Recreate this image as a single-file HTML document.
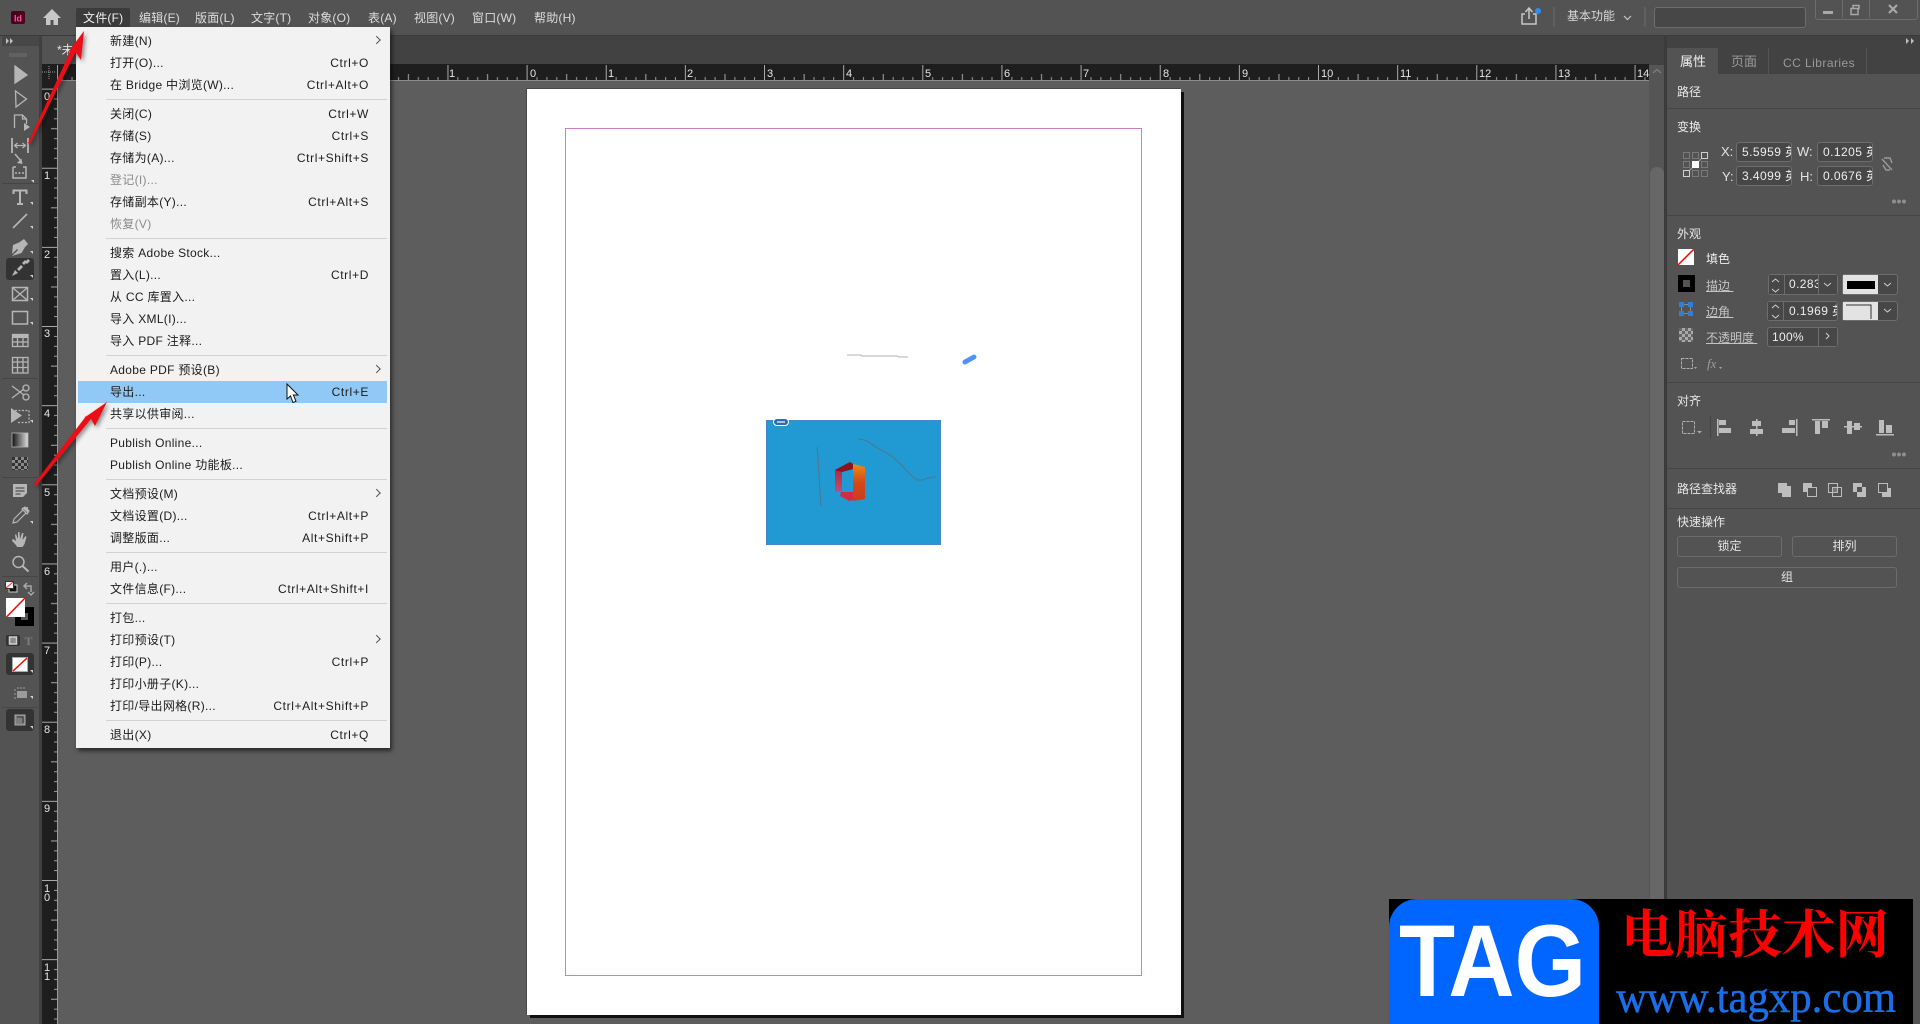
<!DOCTYPE html>
<html lang="zh"><head><meta charset="utf-8"><title>InDesign</title>
<style>
html,body{margin:0;padding:0;background:#5d5d5d}
body{position:relative;width:1920px;height:1024px;overflow:hidden;font-family:"Liberation Sans","Noto Sans CJK SC",sans-serif;font-size:12px;color:#e4e4e4}
.a{position:absolute}
.t{position:absolute;line-height:18px;white-space:nowrap}
.mb{position:absolute;top:9px;line-height:18px;color:#dcdcdc;white-space:nowrap;letter-spacing:.2px}
#menu{position:absolute;left:76px;top:27px;width:314px;height:721px;background:#f2f2f2;box-shadow:2px 3px 4px rgba(0,0,0,.55);color:#1c1c1c;padding-top:3px;box-sizing:border-box}
.i{position:relative;height:22px;line-height:22px;margin:0 3px 0 2px;padding-left:32px;white-space:nowrap;letter-spacing:.3px}
.i b{font-weight:400;position:absolute;right:18px;top:0;letter-spacing:.62px}
.i i{font-style:normal;position:absolute;right:6px;top:7px;width:5px;height:5px;border-top:1px solid #555;border-right:1px solid #555;transform:rotate(45deg) translate(-1px,1px)}
.d{color:#8b8b8b}
.s{height:1px;margin:3px 3px 3px 30px;background:#d2d2d2}
.h{background:#90c8f6}
.in{position:absolute;height:19px;line-height:18px;border:1px solid #6d6d6d;border-radius:3px;background:#474747;overflow:hidden;box-sizing:content-box;color:#eee;white-space:nowrap}
.btn{position:absolute;height:19px;line-height:19px;border:1px solid #6c6c6c;border-radius:3px;text-align:center;color:#e4e4e4}
.sep{position:absolute;left:1667px;right:0;height:1px;background:#454545}
.u{color:#c4c4c4;text-decoration:underline}
</style></head><body>

<div class="a" style="left:0;top:0;width:1920px;height:35px;background:#535353"></div>
<div class="a" style="left:0;top:35px;width:1920px;height:1px;background:#3a3a3a"></div>
<div class="a" style="left:42px;top:36px;width:1623px;height:29px;background:#424242"></div>
<div class="a" style="left:42px;top:36px;width:95px;height:29px;background:#535353"></div>
<div class="t" style="left:57px;top:41px;color:#e4e4e4;font-size:12px">*未</div>
<div class="a" style="left:42px;top:64px;width:1607px;height:16px;background:#1e1e1e"></div>
<div class="a" style="left:0;top:36px;width:39px;height:988px;background:#535353"></div>
<div class="a" style="left:39px;top:36px;width:3px;height:988px;background:#404040"></div>
<div class="a" style="left:2px;top:36px;width:37px;height:10px;background:#474747"></div>
<div class="a" style="left:42px;top:80px;width:15px;height:944px;background:#1e1e1e"></div>

<!-- page -->
<div class="a" style="left:527px;top:89px;width:654px;height:926px;background:#fff;box-shadow:3px 3px 0 #111,-1px -1px 0 #474747"></div>
<div class="a" style="left:565px;top:128px;width:575px;height:846px;border:1px solid #cf7ec4;border-left-color:#9a92ea;border-right-color:#9a92ea"></div>

<!-- image -->
<div class="a" style="left:766px;top:420px;width:173px;height:123px;background:#219ad4;border:1px solid #4486c8"></div>

<!-- right side -->
<div class="a" style="left:1649px;top:65px;width:16px;height:959px;background:#555"></div>
<div class="a" style="left:1650px;top:167px;width:14px;height:857px;background:#676767;border-radius:7px 7px 0 0"></div>
<div class="a" style="left:1664px;top:36px;width:3px;height:988px;background:#3b3b3b"></div>
<div class="a" style="left:1667px;top:36px;width:253px;height:988px;background:#535353"></div>
<div class="a" style="left:1667px;top:36px;width:253px;height:12px;background:#424242"></div>
<div class="a" style="left:1667px;top:48px;width:253px;height:26px;background:#424242"></div>
<div class="a" style="left:1667px;top:48px;width:51px;height:27px;background:#535353"></div>
<div class="a" style="left:1768px;top:48px;width:1px;height:26px;background:#555"></div>
<div class="a" style="left:1866px;top:48px;width:1px;height:26px;background:#555"></div>
<div class="t" style="left:1680px;top:53px;font-size:13px;color:#f0f0f0">属性</div>
<div class="t" style="left:1731px;top:53px;font-size:13px;color:#9a9a9a">页面</div>
<div class="t" style="left:1783px;top:54px;color:#9a9a9a;letter-spacing:.45px">CC Libraries</div>

<div class="t" style="left:1677px;top:83px;color:#e8e8e8">路径</div>
<div class="sep" style="top:108px"></div>
<div class="t" style="left:1677px;top:118px;color:#e8e8e8">变换</div>
<div class="t" style="left:1721px;top:143px;font-size:13px">X:</div>
<div class="t" style="left:1722px;top:168px;font-size:13px">Y:</div>
<div class="t" style="left:1797px;top:143px;font-size:13px">W:</div>
<div class="t" style="left:1800px;top:168px;font-size:13px">H:</div>
<div class="in" style="left:1736px;top:142px;width:54px;height:18px;padding-left:0"><span style="margin-left:5px;letter-spacing:.45px">5.5959 英</span></div>
<div class="in" style="left:1736px;top:166px;width:54px;height:18px"><span style="margin-left:5px;letter-spacing:.45px">3.4099 英</span></div>
<div class="in" style="left:1817px;top:142px;width:54px;height:18px"><span style="margin-left:5px;letter-spacing:.45px">0.1205 英</span></div>
<div class="in" style="left:1817px;top:166px;width:54px;height:18px"><span style="margin-left:5px;letter-spacing:.45px">0.0676 英</span></div>
<div class="sep" style="top:215px"></div>
<div class="t" style="left:1677px;top:225px;color:#e8e8e8">外观</div>
<div class="t" style="left:1706px;top:250px;color:#eee">填色</div>
<div class="t u" style="left:1706px;top:277px">描边&nbsp;</div>
<div class="t u" style="left:1706px;top:303px">边角&nbsp;</div>
<div class="t u" style="left:1706px;top:329px">不透明度&nbsp;</div>

<div class="in" style="left:1768px;top:274px;width:68px;height:19px"><span style="margin-left:20px;letter-spacing:.4px">0.283</span></div>
<div class="a" style="left:1769px;top:275px;width:15px;height:19px;background:#474747;border-right:1px solid #6d6d6d"></div>
<div class="a" style="left:1818px;top:275px;width:18px;height:19px;background:#474747;border-left:1px solid #6d6d6d"></div>
<div class="in" style="left:1842px;top:274px;width:54px;height:19px"></div>
<div class="a" style="left:1843px;top:275px;width:35px;height:19px;background:#e3e3e3"></div>
<div class="a" style="left:1847px;top:281px;width:28px;height:8px;background:#000"></div>

<div class="in" style="left:1767px;top:301px;width:69px;height:18px"><span style="margin-left:21px;letter-spacing:.45px">0.1969 英</span></div>
<div class="a" style="left:1768px;top:302px;width:15px;height:18px;background:#474747;border-right:1px solid #6d6d6d"></div>
<div class="in" style="left:1842px;top:301px;width:54px;height:18px"></div>
<div class="a" style="left:1843px;top:302px;width:35px;height:18px;background:#e3e3e3"></div>

<div class="in" style="left:1767px;top:327px;width:69px;height:18px"><span style="margin-left:4px;letter-spacing:.3px">100%</span></div>
<div class="a" style="left:1818px;top:328px;width:18px;height:18px;background:#474747;border-left:1px solid #6d6d6d"></div>

<div class="sep" style="top:382px"></div>
<div class="t" style="left:1677px;top:392px;color:#e8e8e8">对齐</div>
<div class="sep" style="top:468px"></div>
<div class="t" style="left:1677px;top:480px;color:#e8e8e8">路径查找器</div>
<div class="sep" style="top:508px"></div>
<div class="t" style="left:1677px;top:513px;color:#e8e8e8">快速操作</div>
<div class="btn" style="left:1677px;top:536px;width:103px">锁定</div>
<div class="btn" style="left:1792px;top:536px;width:103px">排列</div>
<div class="btn" style="left:1677px;top:567px;width:218px">组</div>

<!-- top bar right -->
<div class="a" style="left:1553px;top:7px;width:2px;height:20px;background:#5f5f5f"></div>
<div class="t" style="left:1567px;top:7px;color:#d8d8d8">基本功能</div>
<div class="a" style="left:1644px;top:7px;width:2px;height:20px;background:#5f5f5f"></div>
<div class="a" style="left:1654px;top:7px;width:150px;height:19px;background:#474747;border:1px solid #6d6d6d;border-radius:3px"></div>
<div class="a" style="left:1815px;top:-3px;width:101px;height:21px;border:1px solid #6d6d6d;border-radius:3px"></div>
<div class="a" style="left:1842px;top:0;width:1px;height:18px;background:#6d6d6d"></div>
<div class="a" style="left:1869px;top:0;width:1px;height:18px;background:#6d6d6d"></div>

<!-- menu bar -->
<div class="a" style="left:76px;top:8px;width:54px;height:19px;background:#3b3b3b;border-radius:2px 2px 0 0"></div>
<span class="mb" style="left:83px;color:#f0f0f0">文件(F)</span>
<span class="mb" style="left:139px">编辑(E)</span>
<span class="mb" style="left:195px">版面(L)</span>
<span class="mb" style="left:251px">文字(T)</span>
<span class="mb" style="left:308px">对象(O)</span>
<span class="mb" style="left:368px">表(A)</span>
<span class="mb" style="left:414px">视图(V)</span>
<span class="mb" style="left:472px">窗口(W)</span>
<span class="mb" style="left:534px">帮助(H)</span>

<svg class="a" style="left:0;top:0" width="1920" height="1024" viewBox="0 0 1920 1024">
<defs>
<pattern id="hr" patternUnits="userSpaceOnUse" width="79.14" height="16" x="526.6" y="65">
<rect x="0" y="0" width="1" height="16" fill="#a8a8a8"/>
<rect x="9.9" y="12" width="1" height="4" fill="#9a9a9a"/><rect x="19.8" y="12" width="1" height="4" fill="#9a9a9a"/><rect x="29.7" y="12" width="1" height="4" fill="#9a9a9a"/><rect x="39.6" y="9" width="1" height="7" fill="#a8a8a8"/><rect x="49.5" y="12" width="1" height="4" fill="#9a9a9a"/><rect x="59.4" y="12" width="1" height="4" fill="#9a9a9a"/><rect x="69.2" y="12" width="1" height="4" fill="#9a9a9a"/>
</pattern>
<pattern id="vr" patternUnits="userSpaceOnUse" width="16" height="79.14" x="42" y="88.6">
<rect x="0" y="0" width="16" height="1" fill="#a8a8a8"/>
<rect x="12" y="9.9" width="4" height="1" fill="#9a9a9a"/><rect x="12" y="19.8" width="4" height="1" fill="#9a9a9a"/><rect x="12" y="29.7" width="4" height="1" fill="#9a9a9a"/><rect x="9" y="39.6" width="7" height="1" fill="#a8a8a8"/><rect x="12" y="49.5" width="4" height="1" fill="#9a9a9a"/><rect x="12" y="59.4" width="4" height="1" fill="#9a9a9a"/><rect x="12" y="69.2" width="4" height="1" fill="#9a9a9a"/>
</pattern>
<pattern id="ck" patternUnits="userSpaceOnUse" width="6" height="6" x="12" y="457"><rect width="6" height="6" fill="#8a8a8a"/><rect width="3" height="3" fill="#333"/><rect x="3" y="3" width="3" height="3" fill="#333"/></pattern>
<pattern id="ck2" patternUnits="userSpaceOnUse" width="6" height="6" x="1679" y="328"><rect width="6" height="6" fill="#aaa"/><rect width="3" height="3" fill="#666"/><rect x="3" y="3" width="3" height="3" fill="#666"/></pattern>
<linearGradient id="gr"><stop offset="0" stop-color="#111"/><stop offset="1" stop-color="#ddd"/></linearGradient>
<linearGradient id="o1" x1="0" y1="1" x2="0" y2="0"><stop offset="0" stop-color="#c04d74"/><stop offset="1" stop-color="#a81f2c"/></linearGradient>
<linearGradient id="o2" x1="0" y1="0" x2="0" y2="1"><stop offset="0" stop-color="#ee8a12"/><stop offset=".5" stop-color="#d2491c"/><stop offset="1" stop-color="#cc3d1c"/></linearGradient>
</defs>

<!-- rulers -->
<rect x="57" y="65" width="1592" height="16" fill="url(#hr)"/>
<rect x="57" y="80" width="1592" height="1" fill="#8c8c8c"/>
<rect x="42" y="81" width="15" height="943" fill="url(#vr)"/>
<rect x="57" y="65" width="1" height="959" fill="#9c9c9c"/>
<path d="M42 72h14M49 66v13" stroke="#999" stroke-dasharray="1 1" fill="none"/>
<g font-family="Liberation Sans" font-size="11" fill="#e6e6e6">
<text x="449" y="77">1</text><text x="530" y="77">0</text><text x="608" y="77">1</text><text x="687" y="77">2</text><text x="767" y="77">3</text><text x="846" y="77">4</text><text x="925" y="77">5</text><text x="1004" y="77">6</text><text x="1083" y="77">7</text><text x="1163" y="77">8</text><text x="1242" y="77">9</text><text x="1321" y="77">10</text><text x="1400" y="77">11</text><text x="1479" y="77">12</text><text x="1558" y="77">13</text><text x="1637" y="77">14</text>
<text x="44" y="100">0</text><text x="44" y="179">1</text><text x="44" y="258">2</text><text x="44" y="337">3</text><text x="44" y="417">4</text><text x="44" y="496">5</text><text x="44" y="575">6</text><text x="44" y="654">7</text><text x="44" y="733">8</text><text x="44" y="812">9</text><text x="44" y="892">1</text><text x="44" y="901">0</text><text x="44" y="971">1</text><text x="44" y="980">1</text>
</g>

<!-- titlebar left -->
<rect x="11" y="11" width="14" height="13" rx="2" fill="#49021f"/>
<text x="14" y="21.5" font-family="Liberation Sans" font-weight="700" font-size="9" fill="#ff4f9c">Id</text>
<path d="M52 9 43 18h3v7h4.500v-5h3v5H58v-7h3z" fill="#c8c8c8"/>

<!-- share etc -->
<path d="M1525 14h-3v10h14V14h-3" fill="none" stroke="#c8c8c8" stroke-width="1.500"/>
<path d="M1529 19V9M1525.500 12l3.500-4 3.500 4" fill="none" stroke="#c8c8c8" stroke-width="1.500"/>
<circle cx="1538" cy="11" r="3" fill="#2f8cf0"/>
<path d="M1624 16l3.500 3.500L1631 16" fill="none" stroke="#c8c8c8" stroke-width="1.200"/>
<rect x="1823" y="11" width="10" height="3" fill="#a8a8a8"/>
<path d="M1851 8.500h8v-3h-6v3M1851 8.500h7v6h-7z" fill="none" stroke="#a8a8a8" stroke-width="1.500"/>
<path d="M1889 5l8 8M1897 5l-8 8" stroke="#a8a8a8" stroke-width="2.200"/>

<!-- panel collapse arrows -->
<g fill="#c0c0c0"><path d="M6 38l3 3-3 3zM10 38l3 3-3 3zM1906 38l3 3-3 3zM1911 38l3 3-3 3z"/></g>
<path d="M10 53v4M12 53v4M14 53v4M16 53v4M18 53v4M20 53v4M22 53v4M24 53v4M26 53v4" stroke="#6f6f6f" stroke-width="1"/>
<path d="M1653 73l4-3.500 4 3.500" fill="none" stroke="#8a8a8a"/>

<!-- toolbar separators -->
<g fill="#454545"><rect x="2" y="183" width="36" height="1"/><rect x="2" y="378" width="36" height="1"/><rect x="2" y="477" width="36" height="1"/><rect x="2" y="576" width="36" height="1"/><rect x="2" y="707" width="36" height="1"/></g>
<rect x="6" y="258" width="28" height="22" rx="3" fill="#333"/>
<rect x="6" y="635" width="14" height="11" rx="2" fill="#333"/>
<rect x="6" y="653" width="28" height="22" rx="3" fill="#333"/>
<rect x="6" y="709" width="28" height="22" rx="3" fill="#333"/>

<!-- tools -->
<g fill="none" stroke="#b6b6b6" stroke-width="1.300">
<path d="M15 66l12 9-12 8z" fill="#b6b6b6"/>
<path d="M15.500 91l11 8-10.500 8z"/>
<path d="M14.500 128v-13h8l4 4v5M22.500 115v4h4"/>
<path d="M24 123l6 4-6 4z" fill="#b6b6b6" stroke="none"/>
<path d="M12 138v15M28 138v15" stroke-width="1.800"/>
<path d="M15 145.500h10M17.500 143l-3 2.500 3 2.500M22.500 143l3 2.500-3 2.500" stroke-width="1.200"/>
<path d="M13 167v11h13v-11h-3M16 167h-3" stroke-width="1.500"/>
<path d="M15 154l6 7" stroke-width="1.500"/><path d="M17 163l5.500 1-1-5.500z" fill="#b6b6b6" stroke="none"/>
<path d="M16 172v2M19.500 172v2M23 172v2" stroke-width="1.500"/>
<path d="M13.500 194v-3.500h13v3.500M20 190.500V204M17 204h6" stroke-width="2"/>
<path d="M13 228l14-14" stroke-width="1.600"/>
<path d="M24 239l4 5-3 3-3.500 6-9.500 3 1-1 5-5-1-1-5 5 1-9 6-2.500z" fill="#b6b6b6" stroke="none"/>
<path d="M12 276l3-6 3 3zM19 271l-2-2 4-4 2 2zM24 265l-2-2 3-3 2 2zM28 259l2 2-3 3-2-2z" fill="#b6b6b6" stroke="none"/>
<rect x="12.500" y="287.500" width="15" height="13" stroke-width="1.500"/><path d="M13 288l14 12M27 288l-14 12"/>
<rect x="12.500" y="311.500" width="15" height="12.500" stroke-width="1.500"/>
<rect x="12.500" y="334.500" width="15.500" height="12"/><rect x="12" y="334" width="16" height="4" fill="#b6b6b6" stroke="none"/><path d="M17.500 338v8M23 338v8M12.500 342h15"/>
<rect x="12.500" y="357.500" width="15.500" height="15.500"/><path d="M17.500 358v15M23 358v15M13 362h15M13 367.500h15"/>
<circle cx="26" cy="388" r="3"/><circle cx="26" cy="397" r="3"/><path d="M12 386l12 9M12 398l12-9"/>
<path d="M11 408l11 7.500L11 423z" fill="#b6b6b6" stroke="none"/><path d="M15 410.500h14v12H17" stroke-dasharray="2 1.500"/>
<rect x="12" y="433" width="16" height="14" fill="url(#gr)" stroke="#b6b6b6" stroke-width=".8"/>
<rect x="12" y="457" width="16" height="13" fill="url(#ck)" stroke="none"/>
<path d="M13 484h14v9l-4 4H13z" fill="#b6b6b6" stroke="none"/><path d="M15.500 488h9M15.500 491h9M15.500 494h5" stroke="#535353"/>
<path d="M13 523l1-4 9-9 3 3-9 9zM22 509l3-2 4 4-2 3z" stroke-width="1.200"/><path d="M22 508l6-1 0 6z" fill="#b6b6b6" stroke="none"/>
<path d="M17 547c-1-3-5-5-5-7l1-1 3 2-1-6 1-1 2 5 0-7h1.500l.5 7 2-6h1.500l-1 7 3-4 1 1-2 7-2 3z" fill="#b6b6b6" stroke="none"/>
<circle cx="18.500" cy="562" r="5.500" stroke-width="1.500"/><path d="M22.500 566l6 5.500" stroke-width="2"/>
</g>
<!-- small corner triangles -->
<g fill="#cfcfcf"><path d="M34 183v-3h-3zM33 205v-3h-3zM33 229v-3h-3zM33 254v-3h-3zM33 278v-3h-3zM33 301v-3h-3zM33 325v-3h-3zM33 423v-3h-3zM33 524v-3h-3zM33 673v-3h-3zM33 699v-3h-3zM33 729v-3h-3z"/></g>

<!-- default fill / swap -->
<rect x="9" y="585" width="8" height="7" fill="#111" stroke="#ccc"/><rect x="5.500" y="581.500" width="8" height="7" fill="#f4f4f4" stroke="#333"/><path d="M6 588l7-6" stroke="#e33"/>
<path d="M25 586h6v6M27 583l-3 3 3 3M28 592l3 3 3-3" fill="none" stroke="#a8a8a8" stroke-width="1.500"/>
<!-- fill/stroke -->
<path d="M15 607h19v19H15zM21 613v7h7v-7z" fill="#000" fill-rule="evenodd"/>
<rect x="6" y="598" width="19" height="19" fill="#fff"/><path d="M6.500 617l18.500-19" stroke="#f00" stroke-width="1.500"/>
<rect x="9.500" y="637" width="7" height="7" fill="#8c8c8c" stroke="#cfcfcf" stroke-width="1.500"/>
<text x="24.500" y="645" font-family="Liberation Serif" font-weight="700" font-size="12" fill="#7c7c7c">T</text>
<rect x="12.500" y="657.500" width="15" height="14" fill="#fff" stroke="#aaa"/><path d="M13 671l14-13" stroke="#f00" stroke-width="1.500"/>
<rect x="17" y="691" width="10" height="7" fill="#9c9c9c"/><path d="M14 690h2M14 694h2M14 698h2M18 689v-2M21 689v-2M24 689v-2" stroke="#9c9c9c"/>
<rect x="15" y="715" width="10" height="10" fill="#7e7e7e" stroke="#aaa"/><path d="M17 717h6v6" fill="none" stroke="#333"/>

<!-- image details -->
<path d="M817 447l1 9 1 19 1 16 1 15" stroke="#4f7688" fill="none"/>
<path d="M858 439c8 0 12 4 18 8s12 6 18 11 12 12 16 16 7 7 12 6 7-3 14-3" stroke="#4f7688" fill="none"/>
<path d="M847 355h14l1 1h35l2 1h9" stroke="#b3b3b3" fill="none"/>
<path d="M965 362l9-5" stroke="#4f94f4" stroke-width="5" stroke-linecap="round"/>
<rect x="773.500" y="418.500" width="15" height="7" rx="3.500" fill="#2a6cb8" stroke="#fff"/><path d="M777 422h8" stroke="#dcdcdc" stroke-width="1.500"/>
<path d="M835 470l15-8 3 2v5l-5 1-6 2v20h-7z" fill="url(#o1)"/>
<path d="M835 470l15-8 3 2v5l-11 3z" fill="#8a1420"/>
<path d="M853 464l12 3v32l-12 2z" fill="url(#o2)"/>
<path d="M841 492h12v8l-4 1-9-5z" fill="#d62a44"/>

<!-- panel icons -->
<g fill="none" stroke="#7a7a7a"><rect x="1683.500" y="152.500" width="6" height="6"/><rect x="1692.500" y="152.500" width="6" height="6"/><rect x="1683.500" y="161.500" width="6" height="6"/><rect x="1701.500" y="161.500" width="6" height="6"/><rect x="1692.500" y="170.500" width="6" height="6"/><rect x="1701.500" y="170.500" width="6" height="6"/></g>
<g fill="none" stroke="#cfcfcf"><rect x="1701.500" y="152.500" width="6" height="6"/><rect x="1683.500" y="170.500" width="6" height="6"/></g>
<rect x="1692" y="161" width="7" height="7" fill="#fff"/>
<path d="M1690 170l2-2M1699 161l2-2" stroke="#aaa"/>
<g fill="none" stroke="#9a9a9a" stroke-width="1.400"><path d="M1882 159l10 11M1884 158l6 0 2 5M1890 170h-4l-3-5"/></g>
<g fill="#8e8e8e"><circle cx="1894" cy="201.500" r="2"/><circle cx="1899" cy="201.500" r="2"/><circle cx="1904" cy="201.500" r="2"/><circle cx="1894" cy="454.500" r="2"/><circle cx="1899" cy="454.500" r="2"/><circle cx="1904" cy="454.500" r="2"/></g>
<rect x="1678" y="249" width="16" height="16" fill="#fff"/><path d="M1678 265l16-16" stroke="#f00" stroke-width="1.500"/>
<path d="M1678 275h17v17h-17zM1683 280v7h7v-7z" fill="#000" fill-rule="evenodd"/>
<g fill="none" stroke="#cfcfcf" stroke-width="1"><path d="M1772 282l3.500-3 3.500 3M1772 289l3.500 3 3.500-3M1824 283l3.500 3 3.500-3M1884 283l3.500 3 3.500-3M1772 308l3.500-3 3.500 3M1772 315l3.500 3 3.500-3M1884 309l3.500 3 3.500-3M1826 333l3 3-3 3"/></g>
<path d="M1846 305h25v14" fill="none" stroke="#333" stroke-width="1"/>
<rect x="1679" y="302" width="5" height="5" fill="#2c80dc"/><rect x="1688" y="302" width="5" height="5" fill="#2c80dc"/><rect x="1679" y="311" width="5" height="5" fill="#2c80dc"/><rect x="1688" y="311" width="5" height="5" fill="#2c80dc"/><path d="M1684 304.500h4M1684 313.500h4M1681.500 307v4M1690.500 307v4" stroke="#8a8a8a"/>
<rect x="1679" y="328" width="14" height="14" fill="url(#ck2)"/>
<rect x="1681.500" y="358.500" width="11" height="10" fill="none" stroke="#b0b0b0" stroke-dasharray="3 1"/>
<text x="1707" y="368" font-family="Liberation Serif" font-style="italic" font-size="13" fill="#9c9c9c">fx</text>
<path d="M1694 367l3 0-1.500 2zM1719 367l3 0-1.500 2z" fill="#aaa"/>
<rect x="1682.500" y="421.500" width="12" height="12" fill="none" stroke="#b0b0b0" stroke-dasharray="3 1"/><path d="M1697 431h5l-2.500 2.500z" fill="#aaa"/>
<rect x="1710" y="416" width="1" height="22" fill="#444"/>
<g fill="#bdbdbd">
<rect x="1717" y="419" width="1.500" height="17"/><rect x="1719" y="420" width="7" height="5"/><rect x="1719" y="428" width="12" height="5"/>
<rect x="1756" y="419" width="1.500" height="17"/><rect x="1752" y="421" width="9" height="5"/><rect x="1750" y="429" width="13" height="5"/>
<rect x="1796" y="419" width="1.500" height="17"/><rect x="1789" y="420" width="6" height="5"/><rect x="1782" y="428" width="13" height="5"/>
<rect x="1812" y="419" width="18" height="1.500"/><rect x="1815" y="421" width="5" height="13"/><rect x="1822" y="421" width="6" height="7"/>
<rect x="1844" y="426" width="18" height="1.500"/><rect x="1847" y="421" width="5" height="13"/><rect x="1854" y="423" width="6" height="7"/>
<rect x="1876" y="434" width="18" height="1.500"/><rect x="1879" y="420" width="5" height="13"/><rect x="1886" y="425" width="6" height="8"/>
</g>
<!-- pathfinder -->
<g>
<path d="M1778 483h9v3h4v11h-9v-4h-4z" fill="#bdbdbd"/>
<rect x="1803" y="483" width="9" height="9" fill="#bdbdbd"/><rect x="1807.500" y="487.500" width="9" height="9" fill="#535353" stroke="#bdbdbd"/>
<rect x="1828.500" y="483.500" width="9" height="9" fill="none" stroke="#bdbdbd"/><rect x="1832.500" y="487.500" width="9" height="9" fill="none" stroke="#bdbdbd"/><rect x="1833" y="488" width="4" height="4" fill="#777"/>
<path d="M1853 483h9v4h-5v5h-4zM1862 487h4v10h-9v-5h5z" fill="#bdbdbd"/>
<rect x="1878.500" y="483.500" width="9" height="9" fill="none" stroke="#bdbdbd"/><path d="M1888 488h3v9h-9v-4h6z" fill="#bdbdbd"/>
</g>
</svg>

<!-- file menu -->
<div id="menu">
<div class="i">新建(N)<i></i></div>
<div class="i">打开(O)...<b>Ctrl+O</b></div>
<div class="i">在 Bridge 中浏览(W)...<b>Ctrl+Alt+O</b></div>
<div class="s"></div>
<div class="i">关闭(C)<b>Ctrl+W</b></div>
<div class="i">存储(S)<b>Ctrl+S</b></div>
<div class="i">存储为(A)...<b>Ctrl+Shift+S</b></div>
<div class="i d">登记(I)...</div>
<div class="i">存储副本(Y)...<b>Ctrl+Alt+S</b></div>
<div class="i d">恢复(V)</div>
<div class="s"></div>
<div class="i">搜索 Adobe Stock...</div>
<div class="i">置入(L)...<b>Ctrl+D</b></div>
<div class="i">从 CC 库置入...</div>
<div class="i">导入 XML(I)...</div>
<div class="i">导入 PDF 注释...</div>
<div class="s"></div>
<div class="i">Adobe PDF 预设(B)<i></i></div>
<div class="i h">导出...<b>Ctrl+E</b></div>
<div class="i">共享以供审阅...</div>
<div class="s"></div>
<div class="i">Publish Online...</div>
<div class="i">Publish Online 功能板...</div>
<div class="s"></div>
<div class="i">文档预设(M)<i></i></div>
<div class="i">文档设置(D)...<b>Ctrl+Alt+P</b></div>
<div class="i">调整版面...<b>Alt+Shift+P</b></div>
<div class="s"></div>
<div class="i">用户(.)...</div>
<div class="i">文件信息(F)...<b>Ctrl+Alt+Shift+I</b></div>
<div class="s"></div>
<div class="i">打包...</div>
<div class="i">打印预设(T)<i></i></div>
<div class="i">打印(P)...<b>Ctrl+P</b></div>
<div class="i">打印小册子(K)...</div>
<div class="i">打印/导出网格(R)...<b>Ctrl+Alt+Shift+P</b></div>
<div class="s"></div>
<div class="i">退出(X)<b>Ctrl+Q</b></div>
</div>

<!-- arrows, cursor, watermark -->
<svg class="a" style="left:0;top:0" width="1920" height="1024" viewBox="0 0 1920 1024">
<defs><filter id="sh" x="-30%" y="-30%" width="160%" height="160%"><feDropShadow dx="2" dy="2" stdDeviation="2" flood-color="#000" flood-opacity=".45"/></filter></defs>
<g fill="#ec0a12" filter="url(#sh)">
<path d="M84 31 81 60 75.500 52 30 144 28 143 71 50 66 55z"/>
<path d="M107 402 95 426 91 419 36 486 34 484 87 415 84 418z"/>
</g>
<path d="M287 384v15l3.500-3 2.500 6.500 3-1.200-2.600-6.300h4.600z" fill="#fff" stroke="#111" stroke-width="1"/>

<rect x="1389" y="899" width="524" height="125" fill="#000"/>
<path d="M1417 899h154a28 28 0 0 1 28 28v97h-210v-97a28 28 0 0 1 28-28z" fill="#0066ff"/>
<text x="1399" y="996" font-family="Liberation Sans" font-weight="700" font-size="102" fill="#fff" textLength="187" lengthAdjust="spacingAndGlyphs">TAG</text>
<text x="1621" y="953" font-family="Noto Serif CJK SC,serif" font-weight="700" font-size="52" fill="#ff0000" textLength="268" lengthAdjust="spacingAndGlyphs">电脑技术网</text>
<text x="1616" y="1012" font-family="Liberation Serif" font-size="44" fill="#1a6fe8" stroke="#1a6fe8" stroke-width=".5" textLength="280" lengthAdjust="spacingAndGlyphs">www.tagxp.com</text>
</svg>
</body></html>
